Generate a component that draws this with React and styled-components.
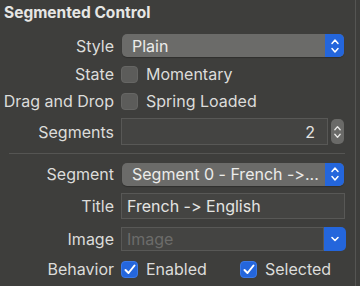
import React from 'react';
import styled, { createGlobalStyle } from 'styled-components';

const GlobalStyle = createGlobalStyle`
  html, body {
    margin: 0;
    padding: 0;
    background: #3e3e3c;
  }
  body {
    font-family: Inter, "Liberation Sans", sans-serif;
    font-feature-settings: "calt" 0, "liga" 0;
    font-variant-ligatures: none;
  }
`;

const BLUE = '#2466dc';

const Panel = styled.div`
  width: 355px;
  height: 286px;
  border-right: 1px solid #555553;
  background: #3e3e3c;
  box-sizing: content-box;
  color: #dcdcda;
  font-size: 16px;
`;

const Header = styled.div`
  height: 30px;
  padding-left: 4px;
  display: flex;
  align-items: center;
  font-weight: 700;
  font-size: 15.5px;
  color: #e6e6e4;
  padding-bottom: 6px;
  box-sizing: border-box;
`;

const Row = styled.div`
  height: ${p => p.$h}px;
  display: grid;
  grid-template-columns: 114px 1fr;
  column-gap: 7px;
  align-items: center;
`;

const Label = styled.div`
  text-align: right;
  white-space: nowrap;
`;

const Controls = styled.div`
  display: flex;
  align-items: center;
  padding-right: ${p => p.$pr || 11}px;
`;

const Popup = styled.div`
  flex: 1;
  height: 23px;
  margin-left: 1px;
  display: flex;
  align-items: stretch;
  background: #6b6b69;
  border-radius: 5px;
  overflow: hidden;
  box-shadow: 0 1px 1px rgba(0, 0, 0, 0.25);
`;

const PopupText = styled.div`
  flex: 1;
  padding-left: 10px;
  display: flex;
  align-items: center;
  color: #ececea;
  white-space: nowrap;
  overflow: hidden;
`;

const BlueButton = styled.div`
  width: ${p => p.$w || 19}px;
  background: ${BLUE};
  display: flex;
  align-items: center;
  justify-content: center;
  border-radius: ${p => (p.$round ? '0 5px 5px 0' : '0')};
`;

const Check = styled.div`
  width: 17px;
  height: 17px;
  border-radius: 4px;
  box-sizing: border-box;
  background: ${p => (p.$on ? BLUE : '#5c5c5a')};
  border: 1px solid ${p => (p.$on ? '#3a78e6' : '#666664')};
  display: flex;
  align-items: center;
  justify-content: center;
  flex-shrink: 0;
`;

const CheckText = styled.span`
  margin-left: 8px;
  width: ${p => (p.$w ? `${p.$w}px` : 'auto')};
  color: #dcdcda;
  white-space: nowrap;
`;

const Field = styled.div`
  flex: 1;
  height: ${p => p.$h || 26}px;
  box-sizing: border-box;
  background: #444442;
  border: 1px solid #585856;
  display: flex;
  align-items: center;
  justify-content: ${p => (p.$right ? 'flex-end' : 'flex-start')};
  padding: 0 ${p => (p.$right ? 12 : 5)}px 0 5px;
  color: ${p => (p.$dim ? '#6c6c6a' : '#e4e4e2')};
  white-space: nowrap;
`;

const Stepper = styled.div`
  width: 13px;
  height: 25px;
  margin-left: 3px;
  background: #6a6a68;
  border-radius: 5px;
  display: flex;
  align-items: center;
  justify-content: center;
`;

const Separator = styled.div`
  height: 10px;
  display: flex;
  align-items: center;
  padding: 0 10px 0 9px;

  &::after {
    content: '';
    flex: 1;
    height: 1px;
    background: #555553;
  }
`;

const ComboBox = styled.div`
  flex: 1;
  display: flex;
  height: 24px;
`;

const UpDown = ({ color = '#fff', small }) => (
  <svg width={small ? 9 : 10} height={small ? 16 : 18} viewBox="0 0 10 18" fill="none">
    <path d="M2 6.5 L5 3 L8 6.5" stroke={color} strokeWidth="1.5" strokeLinecap="round" strokeLinejoin="round" />
    <path d="M2 11.5 L5 15 L8 11.5" stroke={color} strokeWidth="1.5" strokeLinecap="round" strokeLinejoin="round" />
  </svg>
);

const Down = () => (
  <svg width="10" height="8" viewBox="0 0 10 8" fill="none">
    <path d="M2 2.5 L5 5.5 L8 2.5" stroke="#fff" strokeWidth="1.6" strokeLinecap="round" strokeLinejoin="round" />
  </svg>
);

const Tick = () => (
  <svg width="12" height="11" viewBox="0 0 12 11" fill="none">
    <path d="M1.5 6 L4.5 9 L10.5 1.5" stroke="#fff" strokeWidth="2" strokeLinecap="round" strokeLinejoin="round" />
  </svg>
);

export default function App() {
  return (
    <Panel>
      <GlobalStyle />
      <Header>Segmented Control</Header>

      <Row $h={31}>
        <Label>Style</Label>
        <Controls>
          <Popup>
            <PopupText>Plain</PopupText>
            <BlueButton>
              <UpDown />
            </BlueButton>
          </Popup>
        </Controls>
      </Row>

      <Row $h={26}>
        <Label>State</Label>
        <Controls>
          <Check />
          <CheckText>Momentary</CheckText>
        </Controls>
      </Row>

      <Row $h={28}>
        <Label>Drag and Drop</Label>
        <Controls>
          <Check />
          <CheckText>Spring Loaded</CheckText>
        </Controls>
      </Row>

      <Row $h={33}>
        <Label>Segments</Label>
        <Controls>
          <Field $h={27} $right>2</Field>
          <Stepper>
            <UpDown color="#e8e8e6" small />
          </Stepper>
        </Controls>
      </Row>

      <Separator />

      <Row $h={32}>
        <Label>Segment</Label>
        <Controls>
          <Popup>
            <PopupText>Segment 0 - French -&gt;...</PopupText>
            <BlueButton>
              <UpDown />
            </BlueButton>
          </Popup>
        </Controls>
      </Row>

      <Row $h={32}>
        <Label>Title</Label>
        <Controls $pr={10}>
          <Field>French -&gt; English</Field>
        </Controls>
      </Row>

      <Row $h={34}>
        <Label>Image</Label>
        <Controls $pr={9}>
          <ComboBox>
            <Field $h={24} $dim>Image</Field>
            <BlueButton $w={22} $round>
              <Down />
            </BlueButton>
          </ComboBox>
        </Controls>
      </Row>

      <Row $h={26}>
        <Label>Behavior</Label>
        <Controls>
          <Check $on>
            <Tick />
          </Check>
          <CheckText $w={94}>Enabled</CheckText>
          <Check $on>
            <Tick />
          </Check>
          <CheckText>Selected</CheckText>
        </Controls>
      </Row>
    </Panel>
  );
}
